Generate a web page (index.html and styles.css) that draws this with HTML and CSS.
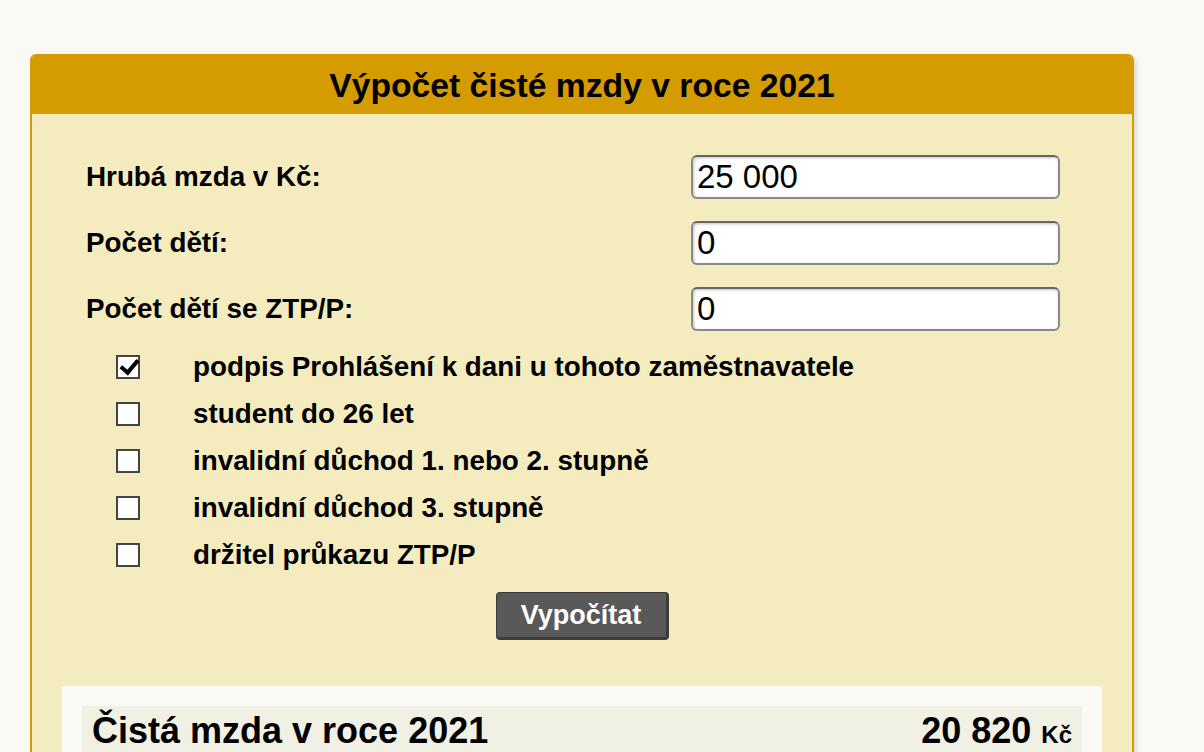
FILE: index.html
```html
<!DOCTYPE html>
<html lang="cs">
<head>
  <meta charset="UTF-8">
  <meta name="viewport" content="width=device-width, initial-scale=1.0">
  <title>Výpočet čisté mzdy 2021</title>
  <link rel="stylesheet" href="styles.css">
</head>
<body>
  <div class="calc">
    <h1 class="calc-head">Výpočet čisté mzdy v roce 2021</h1>

    <form class="calc-body" onsubmit="return false">
      <div class="fields">
        <label for="gross">Hrubá mzda v Kč:</label>
        <input type="text" id="gross" value="25 000">
        <label for="kids">Počet dětí:</label>
        <input type="text" id="kids" value="0">
        <label for="kidsZtp">Počet dětí se ZTP/P:</label>
        <input type="text" id="kidsZtp" value="0">
      </div>

      <div class="checks">
        <label class="check"><input type="checkbox" checked><span>podpis Prohlášení k dani u tohoto zaměstnavatele</span></label>
        <label class="check"><input type="checkbox"><span>student do 26 let</span></label>
        <label class="check"><input type="checkbox"><span>invalidní důchod 1. nebo 2. stupně</span></label>
        <label class="check"><input type="checkbox"><span>invalidní důchod 3. stupně</span></label>
        <label class="check"><input type="checkbox"><span>držitel průkazu ZTP/P</span></label>
      </div>

      <div class="actions">
        <button type="submit">Vypočítat</button>
      </div>

      <div class="result">
        <div class="result-row">
          <span class="result-label">Čistá mzda v roce 2021</span>
          <span class="result-value">20 820 <small>Kč</small></span>
        </div>
      </div>
    </form>
  </div>
</body>
</html>
```

FILE: styles.css
```css
* { box-sizing: border-box; }
body {
  margin: 0;
  font-family: 'Liberation Sans', Arial, sans-serif;
  background: #f9f9f5;
  color: #000;
  overflow: hidden;
}
.calc {
  width: 1104px;
  margin: 54px 0 0 30px;
  border: 2px solid #d49c00;
  border-radius: 6px;
  background: #f4ebbf;
  box-shadow: 3px 3px 5px rgba(0, 0, 0, 0.12);
  overflow: hidden;
}
.calc-head {
  margin: 0;
  height: 58px;
  background: #d49c00;
  text-align: center;
  font-size: 33.7px;
  line-height: 58px;
  font-weight: bold;
}
.calc-body {
  padding: 41px 30px 40px 30px;
}
.fields {
  display: grid;
  grid-template-columns: 1fr 369px;
  row-gap: 22px;
  align-items: center;
  padding: 0 42px 0 24px;
}
.fields label {
  font-size: 27.8px;
  font-weight: bold;
}
.fields input {
  height: 44px;
  width: 369px;
  font-family: inherit;
  font-size: 33px;
  padding: 0 4px;
  border: 2px solid #8a8a8a;
  border-top-color: #666;
  border-radius: 6px;
  background: #fff;
  box-shadow: inset 1px 1px 3px rgba(0, 0, 0, 0.25);
  outline: none;
}
.checks {
  display: flex;
  flex-direction: column;
  gap: 23px;
  padding: 24px 0 0 54px;
}
.check {
  display: flex;
  align-items: center;
  gap: 53px;
  font-size: 27.8px;
  font-weight: bold;
  line-height: 24px;
}
.check input {
  appearance: none;
  -webkit-appearance: none;
  margin: 0;
  width: 24px;
  height: 24px;
  border: 2px solid #444;
  background: #fff;
  position: relative;
}
.check input:checked::after {
  content: "";
  position: absolute;
  left: 6px;
  top: -1px;
  width: 7px;
  height: 14px;
  border: solid #000;
  border-width: 0 4px 4px 0;
  transform: rotate(40deg);
}
.actions {
  display: flex;
  justify-content: center;
  padding-top: 25px;
}
.actions button {
  width: 173px;
  height: 48px;
  background: #595959;
  color: #fff;
  font-family: inherit;
  font-size: 27px;
  font-weight: bold;
  border: 2px solid #3c3c3c;
  border-width: 1px 3px 3px 1px;
  border-radius: 4px;
  cursor: pointer;
}
.result {
  margin-top: 46px;
  background: #f9f9f5;
  padding: 20px 20px 0;
}
.result-row {
  display: flex;
  justify-content: space-between;
  align-items: baseline;
  background: #f0f0e4;
  padding: 4px 10px 20px;
  font-weight: bold;
}
.result-label {
  font-size: 36px;
}
.result-value {
  font-size: 36px;
}
.result-value small {
  font-size: 24px;
}
```
